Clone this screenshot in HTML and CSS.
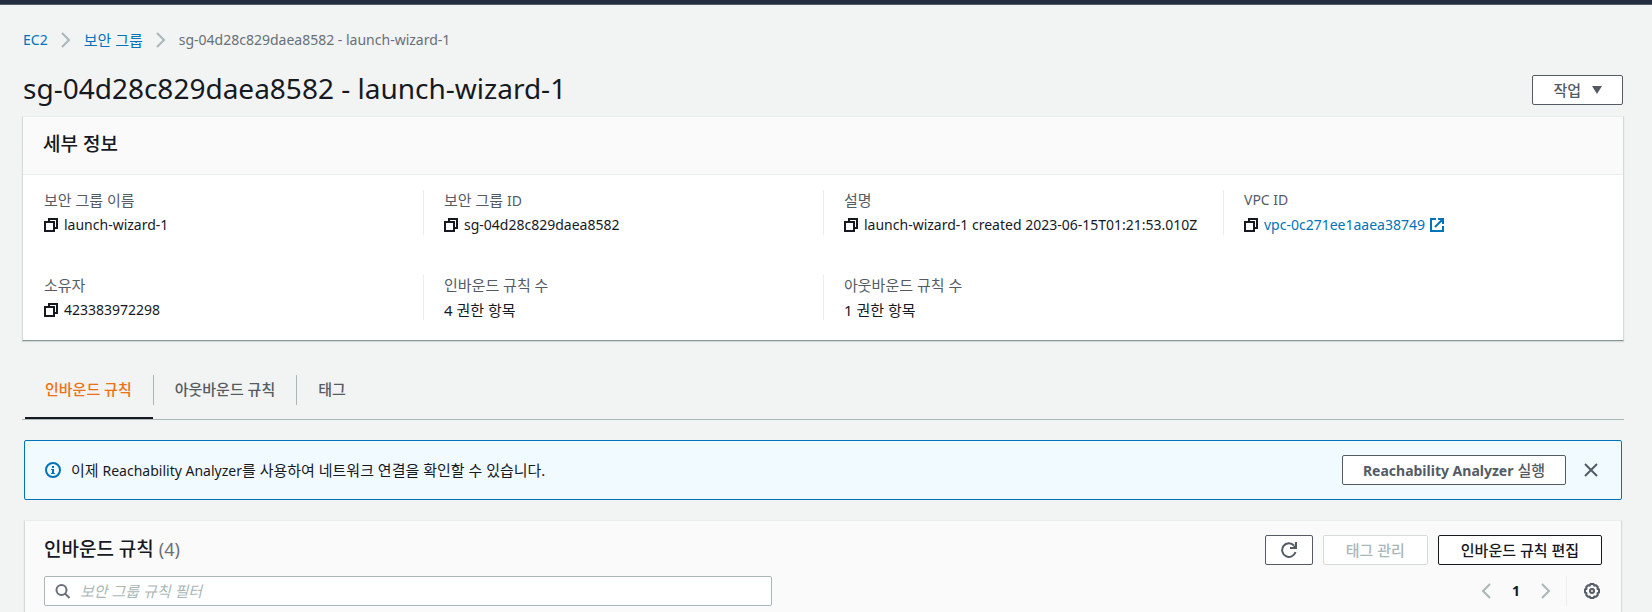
FILE: index.html
```html
<!DOCTYPE html>
<html lang="ko">
<head>
<meta charset="utf-8">
<title>보안 그룹 | EC2</title>
<link rel="stylesheet" href="styles.css">
</head>
<body>
<svg class="sprite" aria-hidden="true">
  <symbol id="copy" viewBox="0 0 16 16"><path d="M1 5h9v9H1zM5 5V2h8v9h-3" fill="none" stroke="currentColor" stroke-width="2"/></symbol>
  <symbol id="chev" viewBox="0 0 16 16"><path d="M4 1l7 7-7 7" fill="none" stroke="currentColor" stroke-width="2"/></symbol>
</svg>
<div class="topbar"></div>
<main class="page">
  <nav class="crumbs" aria-label="이동 경로">
    <a href="#">EC2</a>
    <svg class="icon"><use href="#chev"/></svg>
    <a class="ko" href="#">보안 그룹</a>
    <svg class="icon"><use href="#chev"/></svg>
    <span>sg-04d28c829daea8582 - launch-wizard-1</span>
  </nav>
  <header class="title-row">
    <h1>sg-04d28c829daea8582 - launch-wizard-1</h1>
    <button class="btn ko" type="button">작업 <svg class="caret" viewBox="0 0 10 8"><path d="M0 0h10L5 8z" fill="currentColor"/></svg></button>
  </header>
  <section class="panel">
    <h2 class="panel-head">세부 정보</h2>
    <dl class="details">
      <div class="field"><dt class="ko">보안 그룹 이름</dt><dd><svg class="icon"><use href="#copy"/></svg>launch-wizard-1</dd></div>
      <div class="field"><dt class="ko">보안 그룹 <span class="latin">ID</span></dt><dd><svg class="icon"><use href="#copy"/></svg>sg-04d28c829daea8582</dd></div>
      <div class="field"><dt class="ko">설명</dt><dd><svg class="icon"><use href="#copy"/></svg>launch-wizard-1 created 2023-06-15T01:21:53.010Z</dd></div>
      <div class="field"><dt>VPC ID</dt><dd><svg class="icon"><use href="#copy"/></svg><a href="#">vpc-0c271ee1aaea38749</a><svg class="icon ext" viewBox="0 0 16 16"><path d="M7 2H2v12h12V9M9 2h5v5M14 2L6 10" fill="none" stroke="currentColor" stroke-width="2"/></svg></dd></div>
      <div class="field"><dt class="ko">소유자</dt><dd><svg class="icon"><use href="#copy"/></svg>423383972298</dd></div>
      <div class="field"><dt class="ko">인바운드 규칙 수</dt><dd class="ko">4 권한 항목</dd></div>
      <div class="field"><dt class="ko">아웃바운드 규칙 수</dt><dd class="ko">1 권한 항목</dd></div>
    </dl>
  </section>
  <div class="tabs" role="tablist">
    <button class="tab ko active" type="button" role="tab" aria-selected="true"><span>인바운드 규칙</span></button>
    <button class="tab ko" type="button" role="tab" aria-selected="false"><span>아웃바운드 규칙</span></button>
    <button class="tab ko" type="button" role="tab" aria-selected="false"><span>태그</span></button>
  </div>
  <div class="tab-body">
    <div class="notice">
      <svg class="icon info" viewBox="0 0 16 16"><circle cx="8" cy="8" r="7" fill="none" stroke="currentColor" stroke-width="2"/><path d="M7 4h2v2H7zM6 7h3v4h1v1H6v-1h1V8H6z" fill="currentColor"/></svg>
      <p class="ko">이제 <span class="latin">Reachability Analyzer</span>를 사용하여 네트워크 연결을 확인할 수 있습니다.</p>
      <button class="btn ko" type="button"><span><b class="latin">Reachability Analyzer</b> 실행</span></button>
      <button class="icon-btn" type="button" aria-label="닫기"><svg class="icon" viewBox="0 0 16 16"><path d="M2 2l12 12M14 2L2 14" stroke="currentColor" stroke-width="2"/></svg></button>
    </div>
    <section class="panel rules">
      <div class="rules-head">
        <h2>인바운드 규칙 <span>(4)</span></h2>
        <button class="btn refresh" type="button" aria-label="새로 고침"><svg class="icon" viewBox="0 0 16 16"><path d="M14.500 10a6.800 6.800 0 1 1-1.500-6.500" fill="none" stroke="currentColor" stroke-width="2"/><path d="M16 0v7H9V5h3l2-2V0z" fill="currentColor"/></svg></button>
        <button class="btn ko" type="button" disabled>태그 관리</button>
        <button class="btn ko dark" type="button">인바운드 규칙 편집</button>
      </div>
      <div class="rules-tools">
        <label class="search">
          <svg class="icon" viewBox="0 0 16 16"><circle cx="6.500" cy="7" r="5" fill="none" stroke="currentColor" stroke-width="2"/><path d="M10 10.500L14.500 15" stroke="currentColor" stroke-width="2"/></svg>
          <input class="ko" type="text" placeholder="보안 그룹 규칙 필터" aria-label="보안 그룹 규칙 필터">
        </label>
        <div class="pager">
          <button class="icon-btn muted" type="button" aria-label="이전 페이지"><svg class="icon flip"><use href="#chev"/></svg></button>
          <button class="icon-btn current" type="button">1</button>
          <button class="icon-btn muted" type="button" aria-label="다음 페이지"><svg class="icon"><use href="#chev"/></svg></button>
        </div>
        <button class="icon-btn gear" type="button" aria-label="기본 설정"><svg class="icon" viewBox="0 0 16 16"><path d="M6.500 1h3l.7 1.500 1.800-.3 1.800 1.800-.3 1.800L15 6.500v3l-1.500.7.3 1.800-1.800 1.800-1.800-.3L9.500 15h-3l-.7-1.500-1.800.3L2.200 12l.3-1.800L1 9.500v-3l1.500-.7L2.200 4 4 2.200l1.800.3z" fill="none" stroke="currentColor" stroke-width="2" stroke-linejoin="round"/><circle cx="8" cy="8" r="2" fill="none" stroke="currentColor" stroke-width="2"/></svg></button>
      </div>
    </section>
  </div>
</main>
</body>
</html>
```
FILE: styles.css
```css
* { box-sizing: border-box; }
body {
  margin: 0;
  background: #f2f3f3;
  color: #16191f;
  font: 14px/22px "Noto Sans", "Noto Sans CJK KR", sans-serif;
  height: 100vh;
  overflow: hidden;
}
h1, h2, p, dl, dd { margin: 0; }
button, input { font: inherit; color: inherit; }
a { color: #0073bb; text-decoration: none; }
.ko { font-size: 15px; }
.latin { font-size: 14px; line-height: 14px; }
.sprite { display: none; }
.icon { width: 16px; height: 16px; flex: none; display: block; }
.topbar { height: 5px; background: #232f3e; border-bottom: 1px solid #545b64; }
.page { padding: 24px 28px 0 22px; }
.crumbs { display: flex; align-items: center; gap: 10px; height: 22px; padding-left: 1px; color: #687078; }
.crumbs .icon { color: #aab7b8; }
.title-row { display: flex; align-items: flex-start; justify-content: space-between; padding: 21px 1px 11px; }
.title-row .btn { margin-top: 3px; }
h1 { font-size: 28px; line-height: 32px; font-weight: 400; }
.btn {
  display: flex; align-items: center; justify-content: center; gap: 11px;
  height: 30px; padding: 0 20px;
  border: 1px solid #545b64; border-radius: 2px;
  background: #fff; color: #545b64;
  font-weight: 500; white-space: nowrap;
}
.btn b { font-weight: 700; }
.btn:disabled { border-color: #d5dbdb; color: #aab7b8; }
.btn.dark { border-color: #16191f; color: #16191f; }
.caret { width: 10px; height: 8px; }
.panel {
  background: #fff;
  border: 1px solid #d5dbdb;
  border-top-color: #eaeded;
  border-bottom-color: #879596;
  box-shadow: 0 1px 1px #d5dbdb;
}
.panel-head {
  background: #fafafa; border-bottom: 1px solid #eaeded;
  padding: 15px 20px 18px;
}
h2 { font-size: 19px; line-height: 24px; font-weight: 500; }
.details { display: grid; grid-template-columns: repeat(4, 1fr); row-gap: 40px; padding: 15px 0 20px; }
.field { padding: 0 20px; border-left: 1px solid #eaeded; }
.field:nth-child(4n+1) { border-left-color: transparent; }
dt { color: #545b64; line-height: 20px; }
dd { display: flex; align-items: center; gap: 4px; padding-top: 5px; line-height: 20px; white-space: nowrap; }
.ext { color: #0073bb; }
.tabs { display: flex; margin-top: 24px; padding-left: 3px; height: 55px; border-bottom: 1px solid #aab7b8; }
.tab { display: flex; background: none; border: 0; padding: 10px 0 0; color: #545b64; font-weight: 500; border-bottom: 2px solid transparent; }
.tab span { height: 30px; line-height: 28px; padding: 0 21px; border-left: 1px solid #aab7b8; }
.tab:first-child span { border: 0; padding-left: 20px; }
.tab.active { color: #ec7211; border-bottom-color: #16191f; }
.tab-body { padding: 20px 2px 0; }
.notice { display: flex; align-items: center; height: 60px; padding: 0 20px; background: #f1faff; border: 1px solid #0073bb; border-radius: 2px; }
.info { color: #0073bb; }
.notice p { flex: 1; padding-left: 10px; }
.icon-btn { display: flex; align-items: center; justify-content: center; width: 30px; height: 30px; padding: 0; border: 0; background: none; color: #545b64; }
.notice .icon-btn { margin: 0 -5px 0 10px; }
.rules { margin-top: 20px; padding: 14px 19px 40px; background: #fafafa; }
.rules-head { display: flex; gap: 10px; }
.rules-head .btn { padding: 0 22px; }
.rules-head .refresh { padding: 0 15px; }
.rules-head h2 { flex: 1; line-height: 28px; }
.rules-head h2 span { font-size: 18px; font-weight: 400; color: #687078; }
.rules-tools { display: flex; align-items: center; padding-top: 11px; }
.search { display: flex; align-items: center; gap: 9px; flex: 0 1 728px; height: 30px; padding: 0 10px; background: #fff; border: 1px solid #aab7b8; border-radius: 2px; color: #687078; }
.search input { flex: 1; border: 0; padding: 0; outline: 0; background: none; }
.search .ko { font-size: 15px; }
.search input::placeholder { color: #aab7b8; font-style: italic; opacity: 1; }
.pager { display: flex; margin-left: auto; padding-right: 5px; }
.muted { color: #aab7b8; }
.flip { transform: scaleX(-1); }
.current { color: #16191f; font-weight: 700; }
.gear { border-left: 1px solid #eaeded; padding-left: 10px; margin-right: -5px; width: 41px; }
```
